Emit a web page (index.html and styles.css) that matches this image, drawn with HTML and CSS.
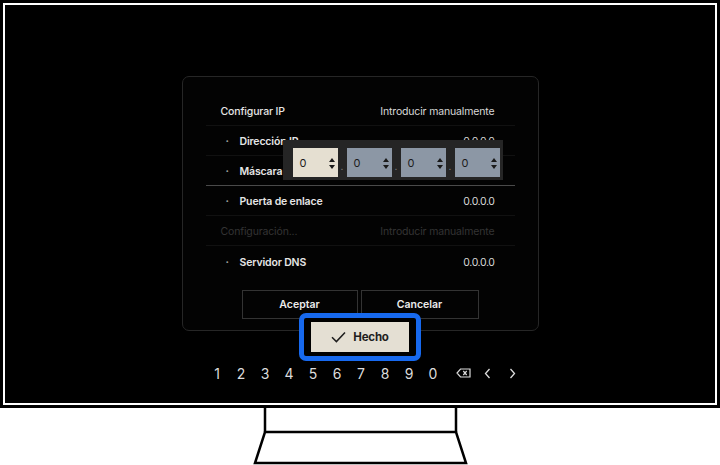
FILE: index.html
```html
<!DOCTYPE html>
<html lang="es">
<head>
<meta charset="utf-8">
<title>Configurar IP</title>
<link rel="stylesheet" href="styles.css">
</head>
<body>
<div class="tv">
  <div class="frame">
    <div class="screen">
      <div class="dialog">
        <div class="row">
          <span class="label">Configurar IP</span>
          <span class="value">Introducir manualmente</span>
        </div>
        <div class="row sub">
          <span class="label"><i class="dot">·</i>Dirección IP</span>
          <span class="value">0.0.0.0</span>
        </div>
        <div class="row sub focus-line">
          <span class="label"><i class="dot">·</i>Máscara de subred</span>
          <span class="value">0.0.0.0</span>
        </div>
        <div class="row sub">
          <span class="label"><i class="dot">·</i>Puerta de enlace</span>
          <span class="value">0.0.0.0</span>
        </div>
        <div class="row dim">
          <span class="label">Configuración...</span>
          <span class="value">Introducir manualmente</span>
        </div>
        <div class="row sub last">
          <span class="label"><i class="dot">·</i>Servidor DNS</span>
          <span class="value">0.0.0.0</span>
        </div>
        <div class="actions">
          <div class="btn ok">Aceptar</div>
          <div class="btn cancel">Cancelar</div>
        </div>

        <!-- octet editor shown over the address rows -->
        <div class="ip-editor">
          <div class="octet active"><span>0</span><i class="spin"></i></div>
          <span class="sep">.</span>
          <div class="octet"><span>0</span><i class="spin"></i></div>
          <span class="sep">.</span>
          <div class="octet"><span>0</span><i class="spin"></i></div>
          <span class="sep">.</span>
          <div class="octet"><span>0</span><i class="spin"></i></div>
        </div>
      </div>

      <div class="keyboard">
        <div class="focus-ring">
          <div class="done">
            <svg class="check" width="15" height="12" viewBox="0 0 15 12"><path d="M1 6.2 L5.4 10.6 L14 1.4" fill="none" stroke="#1e1e1e" stroke-width="1.5"/></svg>
            <span>Hecho</span>
          </div>
        </div>
        <div class="keys">
          <span class="key">1</span><span class="key">2</span><span class="key">3</span><span class="key">4</span><span class="key">5</span><span class="key">6</span><span class="key">7</span><span class="key">8</span><span class="key">9</span><span class="key">0</span>
          <span class="key wide"><svg width="15" height="10" viewBox="0 0 15 10"><path d="M4.5 1 H14 V9 H4.5 L1 5 Z" fill="none" stroke="#dcdcdc" stroke-width="1.2"/><path d="M7.3 3 L10.7 7 M10.7 3 L7.3 7" stroke="#dcdcdc" stroke-width="1.2"/></svg></span>
          <span class="key prev"><svg width="7" height="11" viewBox="0 0 7 11"><path d="M5.5 1 L1.5 5.5 L5.5 10" fill="none" stroke="#dcdcdc" stroke-width="1.3"/></svg></span>
          <span class="key next"><svg width="7" height="11" viewBox="0 0 7 11"><path d="M1.5 1 L5.5 5.5 L1.5 10" fill="none" stroke="#dcdcdc" stroke-width="1.3"/></svg></span>
        </div>
      </div>
    </div>
  </div>
  <svg class="stand" width="720" height="57" viewBox="0 0 720 57">
    <path d="M265 0 V24 M456 0 V24" stroke="#000" stroke-width="2.5" fill="none"/>
    <path d="M265 24 H456 L466 55 H255 Z" stroke="#000" stroke-width="2.5" fill="none" stroke-linejoin="miter"/>
  </svg>
</div>
</body>
</html>
```

FILE: styles.css
```css
html, body {
  margin: 0;
  padding: 0;
  background: #fff;
  overflow: hidden;
}

body {
  font-family: "Inter", "Noto Sans", sans-serif;
  width: 720px;
  height: 465px;
}

.tv {
  display: flex;
  flex-direction: column;
  width: 720px;
}

.frame {
  box-sizing: border-box;
  width: 720px;
  height: 408px;
  border: 3px solid #000;
  padding: 2px;
  background: #fff;
}

.screen {
  height: 100%;
  background: #000;
  display: flex;
  flex-direction: column;
  align-items: center;
  padding-top: 71px;
  box-sizing: border-box;
}

.stand {
  display: block;
}

/* settings dialog */
.dialog {
  position: relative;
  box-sizing: border-box;
  width: 357px;
  height: 255px;
  border: 1px solid #262626;
  border-radius: 7px;
  background: #030303;
  padding: 19px 23px 11px 23px;
}

.row {
  box-sizing: border-box;
  height: 30px;
  display: flex;
  align-items: center;
  justify-content: space-between;
  padding: 2px 20px 0 15px;
  border-bottom: 1px solid #111;
  font-size: 10.5px;
  letter-spacing: -0.15px;
  color: #e6e6e6;
}

.row .label {
  font-weight: 500;
  display: flex;
  align-items: center;
}

.row .value {
  font-weight: 400;
  color: #d8d8d8;
}

.row.sub {
  padding-left: 20px;
}

.row.sub .label {
  font-weight: 600;
}

.row.sub .value {
  letter-spacing: -0.4px;
}

.dot {
  font-style: normal;
  width: 14px;
  color: #9a9a9a;
  font-weight: 700;
}

.row.focus-line {
  border-bottom-color: #4a4a4a;
}

.row.dim .label,
.row.dim .value {
  color: #343434;
  font-weight: 400;
}

.row.last {
  border-bottom: none;
}

.actions {
  display: flex;
  justify-content: center;
  gap: 3px;
  margin-top: 14px;
}

.btn {
  box-sizing: border-box;
  height: 29px;
  border: 1px solid #333;
  display: flex;
  align-items: center;
  justify-content: center;
  font-size: 10.5px;
  font-weight: 600;
  color: #ececec;
}

.btn.ok { width: 116px; }
.btn.cancel { width: 118px; }

/* IP octet editor */
.ip-editor {
  position: absolute;
  left: 100px;
  top: 63px;
  box-sizing: border-box;
  width: 220px;
  height: 40px;
  background: #252525;
  padding: 8px 3px 3px 10px;
  display: flex;
  align-items: stretch;
}

.octet {
  box-sizing: border-box;
  width: 45px;
  height: 29px;
  background: #8c97a5;
  display: flex;
  align-items: center;
  justify-content: space-between;
  padding: 0 3px 0 7px;
  font-size: 11px;
  color: #1c1c1c;
}

.octet.active {
  background: #e5dfd1;
}

.spin {
  position: relative;
  width: 6px;
  height: 12px;
  display: block;
}

.spin::before,
.spin::after {
  content: "";
  position: absolute;
  left: 0;
  border-left: 3px solid transparent;
  border-right: 3px solid transparent;
}

.spin::before {
  top: 1px;
  border-bottom: 4px solid #1a1a1a;
}

.spin::after {
  bottom: 0;
  border-top: 4px solid #1a1a1a;
}

.sep {
  width: 9px;
  text-align: center;
  color: #8a8a8a;
  font-size: 10px;
  line-height: 36px;
}

/* on-screen keypad, drawn above the dialog's lower edge */
.keyboard {
  position: relative;
  z-index: 2;
  display: flex;
  flex-direction: column;
  align-items: center;
  margin-top: -18px;
}

.focus-ring {
  border: 5px solid #1769ee;
  border-radius: 7px;
  padding: 4px 7px;
  background: #000;
}

.done {
  width: 98px;
  height: 30px;
  background: #e4dfd3;
  display: flex;
  align-items: center;
  justify-content: center;
  gap: 7px;
  font-size: 11.5px;
  font-weight: 700;
  letter-spacing: -0.2px;
  color: #1e1e1e;
}

.check {
  display: block;
}

.keys {
  display: flex;
  align-items: center;
  height: 16px;
  margin-top: 4px;
  margin-left: 9px;
  font-size: 14px;
  color: #dcdcdc;
}

.key {
  width: 24px;
  text-align: center;
  display: flex;
  justify-content: center;
  align-items: center;
}

.key.wide {
  width: 36px;
}

.key.prev {
  margin-left: -6px;
}

.key.next {
  margin-left: 1px;
}
```
